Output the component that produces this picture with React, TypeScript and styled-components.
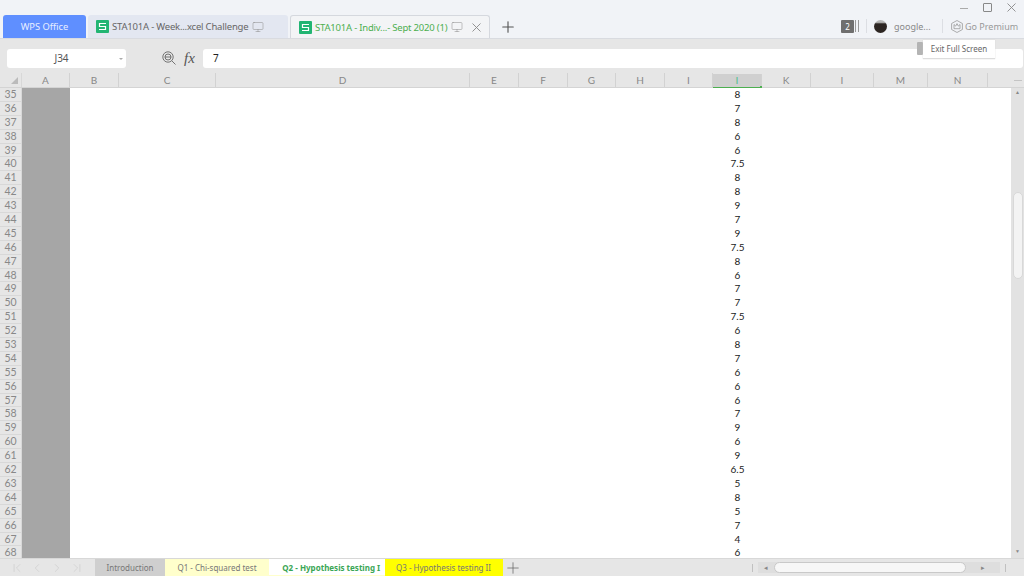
import styled, { createGlobalStyle } from "styled-components";
import { Plus, Monitor, ChevronLeft, ChevronRight, ChevronFirst, ChevronLast } from "lucide-react";

const GlobalStyle = createGlobalStyle`
  html, body { margin: 0; padding: 0; height: 100%; overflow: hidden; }
  body { font-family: "Noto Sans", "Liberation Sans", sans-serif; color: #555; }
  #root { height: 100%; }
`;

const columns = [
  { name: "A", width: 48 },
  { name: "B", width: 49 },
  { name: "C", width: 97 },
  { name: "D", width: 254 },
  { name: "E", width: 49 },
  { name: "F", width: 49 },
  { name: "G", width: 48 },
  { name: "H", width: 49 },
  { name: "I", width: 48 },
  { name: "J", width: 49 },
  { name: "K", width: 49 },
  { name: "L", width: 63 },
  { name: "M", width: 54 },
  { name: "N", width: 60 },
];

const values = [
  "8", "7", "8", "6", "6", "7.5", "8", "8", "9", "7", "9", "7.5", "8", "6", "7", "7", "7.5",
  "6", "8", "7", "6", "6", "6", "7", "9", "6", "9", "6.5", "5", "8", "5", "7", "4", "6",
];

const sheets = [
  { name: "Introduction", kind: "gray" },
  { name: "Q1 - Chi-squared test", kind: "pale" },
  { name: "Q2 - Hypothesis testing I", kind: "active" },
  { name: "Q3 - Hypothesis testing II", kind: "yellow" },
] as const;

function SheetIcon() {
  return (
    <svg width="13" height="13" viewBox="0 0 13 13">
      <rect width="13" height="13" rx="1" fill="#22b573" />
      <path d="M10 3.5H3.5V6.5H9.5V9.5H3" stroke="#fff" strokeWidth="1.2" fill="none" />
    </svg>
  );
}

function CrossIcon() {
  return (
    <svg width="9" height="9" viewBox="0 0 9 9">
      <path d="M.5.5l8 8M8.5.5l-8 8" stroke="#888" strokeWidth=".9" fill="none" />
    </svg>
  );
}

function MagnifierIcon() {
  return (
    <svg width="14" height="14" viewBox="0 0 14 14" fill="none" stroke="#666" strokeWidth=".9">
      <circle cx="6" cy="6" r="5.2" />
      <path d="M3 6a3 3 0 0 1 6 0a3 3 0 0 1-6 0M2.8 6h6.4M9.8 9.8l3.7 3.7" />
    </svg>
  );
}

function PremiumIcon() {
  return (
    <svg width="12" height="13" viewBox="0 0 12 13" fill="none" stroke="#999" strokeWidth=".8">
      <path d="M6 .5l5.4 3v6L6 12.5l-5.4-3v-6z" />
      <path d="M3 4.5l1.7 1.6L6 3.6l1.3 2.5L9 4.5v4.2H3z" />
    </svg>
  );
}

export default function App() {
  return (
    <Page>
      <GlobalStyle />
      <TitleBar>
        <HomeTab>WPS Office</HomeTab>
        <DocTab>
          <SheetIcon />
          <DocName>STA101A - Week...xcel Challenge</DocName>
          <TabMonitor><Monitor size={12} strokeWidth={1} /></TabMonitor>
        </DocTab>
        <DocTab $active>
          <SheetIcon />
          <DocName $active>STA101A - Indiv...- Sept 2020 (1)</DocName>
          <TabMonitor><Monitor size={12} strokeWidth={1} /></TabMonitor>
          <TabClose><CrossIcon /></TabClose>
        </DocTab>
        <AddTab><Plus size={18} strokeWidth={1.5} /></AddTab>
        <RightArea>
          <WindowControls>
            <MinimizeLine />
            <MaximizeBox />
            <CrossIcon />
          </WindowControls>
          <AccountRow>
            <WindowCount>2</WindowCount>
            <CountLines />
            <AccountDivider />
            <Avatar />
            <AccountName>google...</AccountName>
            <PremiumDivider />
            <PremiumIcon />
            <Premium>Go Premium</Premium>
          </AccountRow>
        </RightArea>
      </TitleBar>

      <FormulaBar>
        <NameBox>
          J34
          <NameArrow />
        </NameBox>
        <ZoomButton><MagnifierIcon /></ZoomButton>
        <Fx>fx</Fx>
        <FormulaInput>7</FormulaInput>
        <ExitHandle />
        <ExitTip>Exit Full Screen</ExitTip>
      </FormulaBar>

      <HeaderRow>
        <Corner><CornerMark /></Corner>
        {columns.map((c) => (
          <ColumnHead key={c.name} $selected={c.name === "J"} style={{ width: c.width }}>
            {c.name === "J" || c.name === "L" ? "I" : c.name}
          </ColumnHead>
        ))}
        <HeaderRest><HeaderDash /></HeaderRest>
      </HeaderRow>

      <SheetBody>
        <RowHeads>
          {values.map((_, i) => (
            <RowHead key={i}>{i + 35}</RowHead>
          ))}
        </RowHeads>
        <GrayColumn />
        <BlankColumn />
        <ValueColumn>
          {values.map((v, i) => (
            <Value key={i}>{v}</Value>
          ))}
        </ValueColumn>
        <FillColumn />
        <VScroll>
          <ScrollArrow>▲</ScrollArrow>
          <VThumb />
          <VBottom>▼</VBottom>
        </VScroll>
      </SheetBody>

      <BottomBar>
        <NavButtons>
          <ChevronFirst size={14} strokeWidth={1} />
          <ChevronLeft size={14} strokeWidth={1} />
          <ChevronRight size={14} strokeWidth={1} />
          <ChevronLast size={14} strokeWidth={1} />
        </NavButtons>
        {sheets.map((s) => (
          <SheetTab key={s.name} $kind={s.kind}>{s.name}</SheetTab>
        ))}
        <AddSheet><Plus size={18} strokeWidth={1} /></AddSheet>
        <HScrollArea>
          <Tick />
          <HTrack>
            <SmallArrow>◂</SmallArrow>
            <HThumb />
            <RightArrow>▸</RightArrow>
          </HTrack>
          <Tick />
        </HScrollArea>
      </BottomBar>
    </Page>
  );
}

const Page = styled.div`
  width: 1024px;
  height: 576px;
  display: flex;
  flex-direction: column;
  background: #fff;
  overflow: hidden;
`;

const TitleBar = styled.div`
  height: 39px;
  flex: none;
  display: flex;
  align-items: flex-end;
  padding-left: 3px;
  background: #f1f3f7;
  border-bottom: 1px solid #d9dbe0;
  box-sizing: border-box;
`;

const HomeTab = styled.div`
  width: 83px;
  height: 23px;
  display: flex;
  align-items: center;
  justify-content: center;
  background: #5f8fff;
  border-radius: 3px 3px 0 0;
  color: #e8eeff;
  font-size: 9.3px;
`;

const DocTab = styled.div<{ $active?: boolean }>`
  width: 200px;
  height: 23px;
  margin-left: 2px;
  padding-left: ${(p) => (p.$active ? "8px" : "8px")};
  display: flex;
  align-items: center;
  gap: 3px;
  box-sizing: border-box;
  color: #888;
  background: ${(p) => (p.$active ? "#f3f4f6" : "#e3e7f1")};
  border: ${(p) => (p.$active ? "1px solid #d5d8de" : "none")};
  border-bottom: none;
  border-radius: 3px 3px 0 0;
`;

const DocName = styled.span<{ $active?: boolean }>`
  font-size: 9.5px;
  white-space: nowrap;
  letter-spacing: -0.2px;
  color: ${(p) => (p.$active ? "#4caf50" : "#666")};
`;

const TabMonitor = styled.div`
  display: flex;
  margin-left: 1px;
`;

const TabClose = styled.div`
  display: flex;
  margin-left: 6px;
`;

const AddTab = styled.div`
  width: 36px;
  height: 23px;
  display: flex;
  align-items: center;
  justify-content: center;
  color: #555;
`;

const RightArea = styled.div`
  margin-left: auto;
  align-self: stretch;
  width: 190px;
  display: flex;
  flex-direction: column;
  color: #999;
`;

const WindowControls = styled.div`
  height: 15px;
  display: flex;
  align-items: center;
  justify-content: flex-end;
  gap: 15px;
  padding-right: 8px;
  box-sizing: border-box;
`;

const MinimizeLine = styled.div`
  width: 8px;
  height: 1px;
  margin-top: 2px;
  background: #aaa;
`;

const MaximizeBox = styled.div`
  width: 9px;
  height: 9px;
  box-sizing: border-box;
  border: 1px solid #888;
  border-radius: 1px;
`;

const AccountRow = styled.div`
  display: flex;
  align-items: center;
  height: 14px;
  margin-top: 4px;
  padding-left: 7px;
`;

const WindowCount = styled.div`
  width: 13px;
  height: 13px;
  background: #6f6f6f;
  border-radius: 1px;
  color: #fff;
  font-size: 8px;
  line-height: 13px;
  text-align: center;
`;

const CountLines = styled.div`
  width: 4px;
  height: 12px;
  margin-left: 1px;
  box-sizing: border-box;
  border-left: 1px solid #999;
  border-right: 1px solid #999;
`;

const AccountDivider = styled.div`
  width: 1px;
  height: 14px;
  background: #dcdee3;
  margin: 0 7px;
`;

const PremiumDivider = styled(AccountDivider)`
  margin: 0 8px 0 12px;
`;

const Avatar = styled.div`
  width: 13px;
  height: 13px;
  border-radius: 50%;
  background: linear-gradient(#b8b8b8 0 18%, #2c2522 30%);
`;

const AccountName = styled.span`
  margin-left: 7px;
  width: 36px;
  white-space: nowrap;
  font-size: 9px;
  color: #888;
`;

const Premium = styled.span`
  margin-left: 2px;
  white-space: nowrap;
  font-size: 9px;
  color: #999;
`;

const FormulaBar = styled.div`
  position: relative;
  height: 34px;
  flex: none;
  display: flex;
  align-items: center;
  padding: 4px 1px 0 7px;
  background: #e6e6e6;
  box-sizing: border-box;
`;

const NameBox = styled.div`
  position: relative;
  width: 119px;
  height: 19px;
  padding-right: 10px;
  box-sizing: border-box;
  background: #fff;
  border-radius: 3px;
  font-size: 10px;
  line-height: 19px;
  text-align: center;
  color: #555;
`;

const NameArrow = styled.div`
  position: absolute;
  right: 3px;
  top: 9px;
  border: 2px solid transparent;
  border-top-color: #aaa;
`;

const ZoomButton = styled.div`
  margin-left: 36px;
  width: 14px;
  display: flex;
`;

const Fx = styled.div`
  margin-left: 8px;
  width: 19px;
  font-family: "Liberation Serif", serif;
  font-style: italic;
  font-size: 15px;
  color: #555;
`;

const FormulaInput = styled.div`
  flex: 1;
  height: 19px;
  padding-left: 10px;
  background: #fff;
  border-radius: 3px;
  font-size: 10px;
  line-height: 19px;
  color: #222;
`;

const ExitHandle = styled.div`
  position: absolute;
  left: 917px;
  top: 3px;
  width: 6px;
  height: 13px;
  background: #b4b4b4;
  border-radius: 1px;
`;

const ExitTip = styled.div`
  position: absolute;
  left: 923px;
  top: 1px;
  width: 72px;
  height: 18px;
  background: #fff;
  border-bottom: 1px solid #ddd;
  box-shadow: 0 0 1px #ccc;
  font-size: 8px;
  line-height: 18px;
  text-align: center;
  color: #666;
`;

const HeaderRow = styled.div`
  height: 14px;
  flex: none;
  display: flex;
  background: #e6e6e6;
  border-bottom: 1px solid #d4d4d4;
`;

const Corner = styled.div`
  width: 22px;
  flex: none;
  display: flex;
  align-items: flex-end;
  justify-content: flex-end;
  padding: 0 3px 3px 0;
  box-sizing: border-box;
  border-right: 1px solid #d8d8d8;
`;

const CornerMark = styled.div`
  width: 0;
  height: 0;
  border-style: solid;
  border-width: 0 0 7px 7px;
  border-color: transparent transparent #bbb transparent;
`;

const ColumnHead = styled.div<{ $selected?: boolean }>`
  position: relative;
  flex: none;
  box-sizing: border-box;
  margin-top: ${(p) => (p.$selected ? "1px" : "0")};
  text-align: center;
  font-family: "Lato", sans-serif;
  font-size: 10px;
  line-height: ${(p) => (p.$selected ? "12px" : "14px")};
  color: ${(p) => (p.$selected ? "#4cbf8f" : "#888")};
  background: ${(p) => (p.$selected ? "#d0d0d0" : "transparent")};
  border-right: 1px solid #d2d2d2;
  box-shadow: ${(p) => (p.$selected ? "0 1px 0 #4caf50" : "none")};
  &::after {
    content: "";
    display: ${(p) => (p.$selected ? "block" : "none")};
    position: absolute;
    right: -1px;
    bottom: -1px;
    width: 2px;
    height: 2px;
    background: #4caf50;
  }
`;

const HeaderRest = styled.div`
  flex: 1;
  display: flex;
  justify-content: flex-end;
  align-items: center;
  padding-right: 2px;
`;

const HeaderDash = styled.div`
  width: 8px;
  height: 1px;
  background: #c4c4c4;
`;

const SheetBody = styled.div`
  flex: 1;
  display: flex;
  min-height: 0;
  overflow: hidden;
`;

const RowHeads = styled.div`
  width: 22px;
  flex: none;
  background: #e6e6e6;
  border-right: 1px solid #d8d8d8;
  box-sizing: border-box;
`;

const RowHead = styled.div`
  height: 13.9px;
  box-sizing: border-box;
  border-bottom: 1px solid #d8d8d8;
  font-family: "Lato", sans-serif;
  font-size: 10.5px;
  line-height: 13px;
  text-align: center;
  color: #888;
`;

const GrayColumn = styled.div`
  width: 48px;
  flex: none;
  background: #a6a6a6;
`;

const BlankColumn = styled.div`
  width: 643px;
  flex: none;
`;

const ValueColumn = styled.div`
  width: 49px;
  flex: none;
`;

const Value = styled.div`
  height: 13.9px;
  font-family: "Lato", sans-serif;
  font-size: 10px;
  line-height: 13.9px;
  text-align: center;
  color: #1a1a1a;
`;

const FillColumn = styled.div`
  flex: 1;
`;

const VScroll = styled.div`
  width: 13px;
  flex: none;
  display: flex;
  flex-direction: column;
  align-items: center;
  background: #e2e2e2;
`;

const ScrollArrow = styled.div`
  font-size: 5px;
  line-height: 8px;
  height: 104px;
  color: #888;
`;

const VThumb = styled.div`
  width: 10px;
  height: 87px;
  background: #f3f3f3;
  border: 1px solid #d8d8d8;
  border-radius: 5px;
  box-sizing: border-box;
`;

const VBottom = styled.div`
  margin-top: auto;
  font-size: 5px;
  line-height: 14px;
  color: #888;
`;

const BottomBar = styled.div`
  height: 18px;
  flex: none;
  display: flex;
  background: #e6e6e6;
  border-top: 1px solid #d8d8d8;
  box-sizing: border-box;
`;

const NavButtons = styled.div`
  width: 95px;
  flex: none;
  padding-left: 10px;
  box-sizing: border-box;
  display: flex;
  align-items: center;
  gap: 6px;
  color: #c8c8c8;
`;

const tabColors = { gray: "#cfcfcf", pale: "#ffffcc", active: "#ffffff", yellow: "#ffff00" };
const tabWidths = { gray: 70, pale: 104, active: 115.5, yellow: 118 };

const SheetTab = styled.div<{ $kind: keyof typeof tabColors }>`
  width: ${(p) => tabWidths[p.$kind]}px;
  flex: none;
  box-sizing: border-box;
  padding-left: ${(p) => (p.$kind === "active" ? "9px" : "0")};
  text-align: center;
  white-space: nowrap;
  overflow: hidden;
  font-size: 8px;
  line-height: 17px;
  background: ${(p) => tabColors[p.$kind]};
  color: ${(p) => (p.$kind === "active" ? "#3aa655" : "#777")};
  font-weight: ${(p) => (p.$kind === "active" ? 700 : 400)};
  border-bottom: ${(p) => (p.$kind === "active" ? "1px solid #ffffcc" : "none")};
`;

const AddSheet = styled.div`
  width: 20px;
  display: flex;
  align-items: center;
  justify-content: center;
  color: #666;
`;

const HScrollArea = styled.div`
  margin-left: auto;
  display: flex;
  align-items: center;
  padding-right: 18px;
  gap: 5px;
`;

const Tick = styled.div`
  width: 1px;
  height: 8px;
  background: #c0c0c0;
`;

const HTrack = styled.div`
  width: 242px;
  height: 11px;
  display: flex;
  align-items: center;
  background: #dedede;
`;

const SmallArrow = styled.div`
  width: 16px;
  flex: none;
  text-align: center;
  font-size: 7px;
  line-height: 11px;
  color: #888;
`;

const RightArrow = styled(SmallArrow)`
  width: 34px;
`;

const HThumb = styled.div`
  flex: 1;
  height: 11px;
  box-sizing: border-box;
  background: #f7f7f7;
  border: 1px solid #c9c9c9;
  border-radius: 6px;
`;
